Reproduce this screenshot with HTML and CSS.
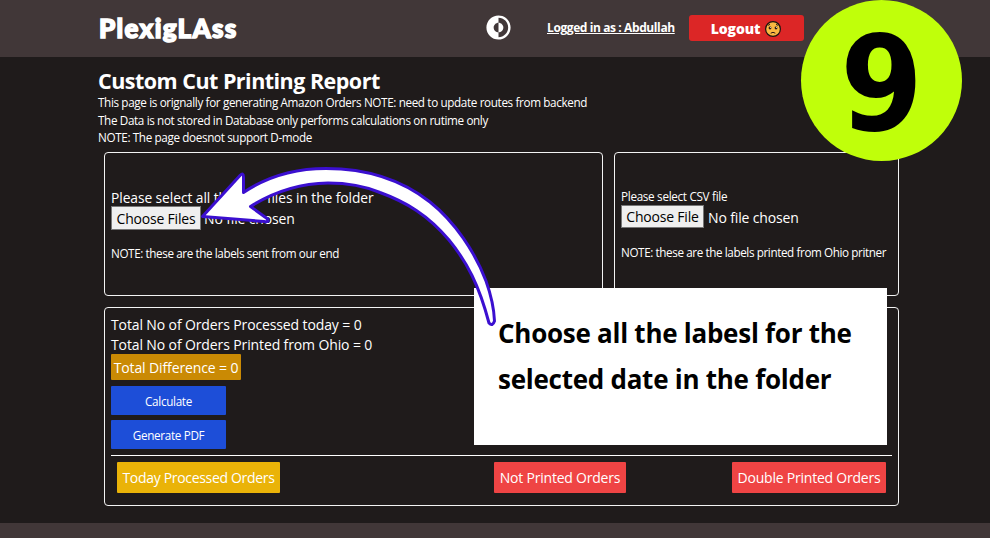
FILE: index.html
```html
<!DOCTYPE html>
<html lang="en">
<head>
<meta charset="utf-8">
<title>PlexigLAss</title>
<link rel="stylesheet" href="styles.css">
</head>
<body>
<header class="topbar">
  <div class="brand">PlexigLAss</div>
  <svg class="mode" viewBox="0 0 24 24" fill="#fff"><path d="M12 16C14.2091 16 16 14.2091 16 12C16 9.79086 14.2091 8 12 8V16Z"/><path fill-rule="evenodd" d="M12 2C6.47715 2 2 6.47715 2 12C2 17.5228 6.47715 22 12 22C17.5228 22 22 17.5228 22 12C22 6.47715 17.5228 2 12 2ZM12 4V8C9.79086 8 8 9.79086 8 12C8 14.2091 9.79086 16 12 16V20C16.4183 20 20 16.4183 20 12C20 7.58172 16.4183 4 12 4Z"/></svg>
  <a class="user">Logged in as : Abdullah</a>
  <button class="logout"><span>Logout</span>
    <svg class="face" viewBox="0 0 18 18"><circle cx="9" cy="9" r="7.4" fill="#fbb841" stroke="#1b1410" stroke-width="1.2"/><circle cx="6" cy="8" r="1.4" fill="#2b1a14"/><circle cx="12" cy="8" r="1.4" fill="#2b1a14"/><circle cx="6.4" cy="7.5" r=".5" fill="#fff"/><circle cx="12.4" cy="7.5" r=".5" fill="#fff"/><path d="M3.8 5.4L6 4.4M14.2 5.4L12 4.4M6.7 13.2Q9 11.4 11.3 13.2" fill="none" stroke="#2b1a14" stroke-width="1"/></svg>
  </button>
</header>
<main class="page">
  <h1 class="title">Custom Cut Printing Report</h1>
  <p class="note">This page is orignally for generating Amazon Orders NOTE: need to update routes from backend</p>
  <p class="note">The Data is not stored in Database only performs calculations on rutime only</p>
  <p class="note">NOTE: The page doesnot support D-mode</p>
  <div class="cards">
    <section class="card labels">
      <p class="prompt">Please select all the PDF files in the folder</p>
      <div class="picker"><button class="choose">Choose Files</button><span class="nofile">No file chosen</span></div>
      <p class="hint">NOTE: these are the labels sent from our end</p>
    </section>
    <section class="card csv">
      <p class="prompt">Please select CSV file</p>
      <div class="picker"><button class="choose">Choose File</button><span class="nofile">No file chosen</span></div>
      <p class="hint">NOTE: these are the labels printed from Ohio pritner</p>
    </section>
    <section class="card totals">
      <p class="total">Total No of Orders Processed today = 0</p>
      <p class="total">Total No of Orders Printed from Ohio = 0</p>
      <p class="difference">Total Difference = 0</p>
      <button class="action">Calculate</button>
      <button class="action pdf">Generate PDF</button>
      <div class="tags">
        <span class="tag today">Today Processed Orders</span>
        <span class="tag missing">Not Printed Orders</span>
        <span class="tag double">Double Printed Orders</span>
      </div>
    </section>
  </div>
</main>
<footer class="footer"></footer>
<aside class="callout">Choose all the labesl for the<br>selected date in the folder</aside>
<svg class="arrow" viewBox="0 0 990 538"><path d="M202.500 216.500L240 175.500Q243.500 172 243.500 177V192.500C268 176 297 168.500 326 168.500C366 168.500 402 180 430 202C455 222 475 252 486 281C491 295 494 309 494.500 321Q492.500 327 489 323C479 285 467 262 449 240C428 215 406 202 380 192.500C362 185 345 183 328 183C298 183.500 272 193 250.500 206.500L267 218.500Q270 222.500 264 221.500Z" fill="#fff" stroke="#3b0fd0" stroke-width="3" stroke-linejoin="round"/></svg>
<div class="step">9</div>
</body>
</html>
```

FILE: styles.css
```css
* { box-sizing: border-box; }
body { margin: 0; width: 990px; height: 538px; overflow: hidden; position: relative; display: flex; flex-direction: column; background: #1f1b1b; color: #fff; font-family: "Open Sans", "Noto Sans", sans-serif; }
h1, p { margin: 0; white-space: nowrap; }
button { border: 0; padding: 0; font-family: inherit; color: inherit; white-space: nowrap; }
.topbar { height: 57px; flex: none; background: #413738; display: flex; align-items: center; padding-left: 98px; padding-bottom: 2px; }
.brand { width: 386px; padding-left: 1px; font: 900 26px/30px Lato, sans-serif; letter-spacing: 1.3px; -webkit-text-stroke: 1.5px #fff; }
.mode { width: 29px; height: 29px; margin-right: 34px; }
.user { width: 142px; font-size: 12px; font-weight: 700; text-decoration: underline; white-space: nowrap; letter-spacing: -.4px; }
.logout { width: 115px; height: 26px; border-radius: 3px; background: #dc2626; display: flex; align-items: center; justify-content: center; gap: 4px; font-size: 14px; font-weight: 800; letter-spacing: -.1px; padding-top: 2px; }
.face { width: 18px; height: 18px; }
.page { flex: 1; padding: 10px 91px 0 98px; }
.title { font-size: 21.5px; line-height: 27px; font-weight: 700; letter-spacing: -.52px; }
.note { font-size: 11.7px; line-height: 17.5px; letter-spacing: -.36px; }
.cards { margin: 5.5px 0 0 6px; display: grid; grid-template-columns: 499px 285px; grid-template-rows: 144px 199px; gap: 11px; }
.card { border: 1px solid #f3f3f3; border-radius: 4px; padding: 0 6px; }
.labels, .csv { padding-top: 34px; }
.labels .prompt { font-size: 13.8px; line-height: 21px; letter-spacing: -.07px; }
.csv .prompt { font-size: 11.7px; line-height: 18px; letter-spacing: -.3px; }
.picker { display: flex; align-items: center; gap: 4px; font-size: 14px; letter-spacing: -.14px; }
.labels .picker { gap: 3px; margin-top: -2px; }
.choose { width: 90px; height: 24px; background: #efefef; color: #000; border: 1px solid #767676; font-size: 14px; letter-spacing: -.2px; }
.csv .choose { width: 83px; height: 23px; }
.nofile { padding-top: 1px; }
.hint { font-size: 11.7px; line-height: 18px; margin-top: 14px; letter-spacing: -.4px; }
.csv .hint { margin-top: 15px; }
.totals { grid-column: 1 / 3; padding-top: 7px; }
.total { font-size: 14px; line-height: 20px; letter-spacing: -.12px; }
.difference { width: 130px; height: 26px; line-height: 27px; margin: -1px 0 6px; text-align: center; background: #ca8a04; border-radius: 1px; font-size: 14px; letter-spacing: -.12px; }
.action { display: block; width: 115px; height: 29px; margin-bottom: 5px; background: #1d4ed8; border-radius: 1px; font-size: 11.7px; letter-spacing: -.32px; }
.pdf { margin-bottom: 6px; }
.tags { border-top: 1px solid #fff; padding: 6px 6px 0; display: flex; }
.tag { height: 31px; line-height: 32px; text-align: center; font-size: 14px; border-radius: 1px; background: #ef4444; white-space: nowrap; letter-spacing: -.22px; }
.today { width: 163px; background: #eab308; letter-spacing: -.32px; }
.missing { width: 132px; margin-left: 214px; }
.double { width: 154px; margin-left: auto; }
.footer { height: 15px; flex: none; background: #413738; }
.callout { position: absolute; left: 474px; top: 288px; width: 413px; height: 157px; padding: 22px 24px; background: #fff; color: #000; font-size: 26px; line-height: 46px; font-weight: 700; letter-spacing: -.26px; white-space: nowrap; }
.arrow { position: absolute; left: 0; top: 0; width: 990px; height: 538px; }
.step { position: absolute; left: 801px; top: 0; width: 161px; height: 161px; border-radius: 50%; background: #c0ff0a; color: #000; font: 700 132px/168px "DejaVu Sans Condensed", "DejaVu Sans", sans-serif; font-stretch: condensed; text-align: center; }
```
